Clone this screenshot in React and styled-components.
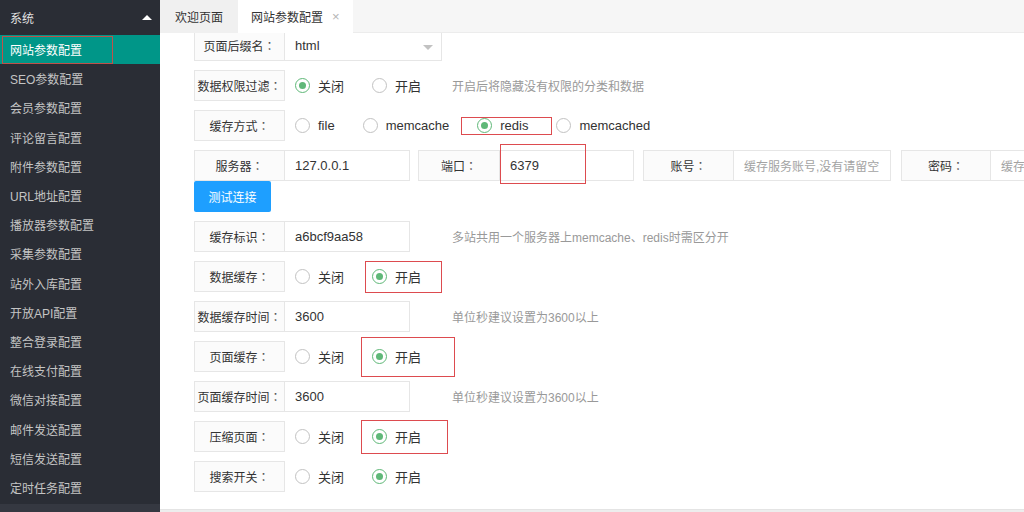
import React from "react"
import styled, { createGlobalStyle, css } from "styled-components"

const GlobalStyle = createGlobalStyle`
    html, body {
        margin: 0;
        padding: 0;
        background: #fff;
    }
    body {
        font-family: "Liberation Sans", "Noto Sans CJK SC", sans-serif;
        color: #333;
    }
    * {
        box-sizing: border-box;
    }
`

const Page = styled.div`
    display: flex;
    width: 1024px;
    height: 512px;
    overflow: hidden;
`

const Sidebar = styled.nav`
    width: 160px;
    flex-shrink: 0;
    background: #2a2d35;
    overflow: hidden;
`

const SideHeader = styled.div`
    height: 35px;
    padding: 0 8px 0 10px;
    display: flex;
    align-items: center;
    justify-content: space-between;
    font-size: 12px;
    color: #e2e2e2;
`

const Caret = styled.span`
    width: 0;
    height: 0;
    border-left: 5px solid transparent;
    border-right: 5px solid transparent;
    border-bottom: 5px solid #fff;
`

const SideItem = styled.div`
    position: relative;
    height: 29.2px;
    padding-left: 10px;
    display: flex;
    align-items: center;
    font-size: 12px;
    color: #c4c4c4;
    ${p => p.$active && css`
        background: #009688;
        color: #fff;
    `}
`

const SideMark = styled.span`
    position: absolute;
    left: 2px;
    top: 1px;
    bottom: 0;
    width: 111px;
    border: 1.5px solid #c0514a;
`

const SideGroup = styled.div`
    height: 35px;
    margin-top: 2px;
    background: #353841;
`

const Main = styled.main`
    flex: 1;
    display: flex;
    flex-direction: column;
    min-width: 0;
`

const TabBar = styled.div`
    height: 33px;
    flex-shrink: 0;
    display: flex;
    background: #f6f6f6;
    border-bottom: 1px solid #ececec;
    position: relative;
    z-index: 2;
`

const Tab = styled.div`
    height: 33px;
    padding: 0 ${p => (p.$active ? "13px" : "15px")};
    display: flex;
    align-items: center;
    font-size: 12px;
    color: #333;
    background: ${p => (p.$active ? "#fff" : "#f0f0f0")};
`

const Close = styled.span`
    margin-left: 9px;
    font-size: 13px;
    color: #b5b5b5;
`

const Body = styled.section`
    flex: 1;
    overflow: hidden;
    padding-left: 34px;
`

const Footer = styled.footer`
    height: 3px;
    flex-shrink: 0;
    background: #ededed;
    border-top: 1px solid #e4e4e4;
`

const Form = styled.div`
    margin-top: -3px;
    display: flex;
    flex-direction: column;
`

const Row = styled.div`
    display: flex;
    align-items: center;
    height: 31px;
    margin-bottom: ${p => (p.$tight ? "0" : "9px")};
`

const Group = styled.div`
    display: flex;
    height: 31px;
    margin-right: ${p => p.$gap || 0}px;
`

const Label = styled.div`
    width: ${p => p.$w || 91}px;
    height: 31px;
    flex-shrink: 0;
    display: flex;
    align-items: center;
    justify-content: center;
    padding: 0 2px;
    border: 1px solid #e6e6e6;
    background: #fbfbfb;
    font-size: 12px;
    color: #333;
    white-space: nowrap;
`

const Colon = styled.span`
    font-family: "Noto Sans CJK TC", sans-serif;
    color: #555;
`

const Field = styled.div`
    min-width: 167px;
    height: 31px;
    display: flex;
    align-items: center;
`

const Input = styled.div`
    position: relative;
    width: ${p => p.$w || 125}px;
    height: 31px;
    padding: 0 10px;
    display: flex;
    align-items: center;
    border: 1px solid #e6e6e6;
    border-left: 0;
    background: #fff;
    font-size: ${p => (p.$placeholder ? "12px" : "13px")};
    color: ${p => (p.$placeholder ? "#a3a3a3" : "#333")};
    white-space: nowrap;
    overflow: hidden;
`

const Select = styled(Input)`
    &::after {
        content: "";
        position: absolute;
        right: 8px;
        top: 14px;
        border-left: 5px solid transparent;
        border-right: 5px solid transparent;
        border-top: 5px solid #c2c2c2;
    }
`

const Radios = styled.div`
    display: flex;
    align-items: center;
    height: 31px;
    padding-left: 10px;
`

const RadioItem = styled.div`
    position: relative;
    height: 31px;
    display: flex;
    align-items: center;
    margin-right: 28px;
    font-size: 13px;
    color: #333;
`

const Circle = styled.span`
    width: 15px;
    height: 15px;
    margin-right: 8px;
    border-radius: 50%;
    border: 1px solid ${p => (p.$on ? "#5fb878" : "#c2c2c2")};
    display: flex;
    align-items: center;
    justify-content: center;
    &::after {
        content: "";
        display: ${p => (p.$on ? "block" : "none")};
        width: 7px;
        height: 7px;
        border-radius: 50%;
        background: #5fb878;
    }
`

const Hint = styled.div`
    font-size: 12px;
    color: #999;
    white-space: nowrap;
`

const Button = styled.div`
    width: 77px;
    height: 31px;
    display: flex;
    align-items: center;
    justify-content: center;
    background: #1e9fff;
    color: #fff;
    font-size: 12px;
    border-radius: 2px;
    margin-bottom: 9px;
`

const Marked = styled.div`
    position: relative;
    display: flex;
`

const Mark = styled.span`
    position: absolute;
    top: ${p => p.$t}px;
    right: ${p => p.$r}px;
    bottom: ${p => p.$b}px;
    left: ${p => p.$l}px;
    border: 1.5px solid #dd4b4f;
    pointer-events: none;
`

const menu = [
    "网站参数配置", "SEO参数配置", "会员参数配置", "评论留言配置", "附件参数配置",
    "URL地址配置", "播放器参数配置", "采集参数配置", "站外入库配置", "开放API配置",
    "整合登录配置", "在线支付配置", "微信对接配置", "邮件发送配置", "短信发送配置",
    "定时任务配置",
]

function FormLabel({ w, children }) {
    return (
        <Label $w={w}>
            {children}
            <Colon>：</Colon>
        </Label>
    )
}

function Radio({ label, on, mark }) {
    return (
        <RadioItem>
            <Circle $on={on} />
            {label}
            {mark && <Mark $t={mark[0]} $r={mark[1]} $b={mark[2]} $l={mark[3]} />}
        </RadioItem>
    )
}

function SwitchRow({ label, on, mark }) {
    return (
        <Row>
            <FormLabel>{label}</FormLabel>
            <Field>
                <Radios>
                    <Radio label="关闭" on={!on} />
                    <Radio label="开启" on={on} mark={mark} />
                </Radios>
            </Field>
        </Row>
    )
}

function TextRow({ label, value, hint }) {
    return (
        <Row>
            <FormLabel>{label}</FormLabel>
            <Field>
                <Input>{value}</Input>
            </Field>
            {hint && <Hint>{hint}</Hint>}
        </Row>
    )
}

export default function App() {
    return (
        <Page>
            <GlobalStyle />
            <Sidebar>
                <SideHeader>
                    系统
                    <Caret />
                </SideHeader>
                {menu.map((m, i) => (
                    <SideItem key={m} $active={i === 0}>
                        {m}
                        {i === 0 && <SideMark />}
                    </SideItem>
                ))}
                <SideGroup />
            </Sidebar>
            <Main>
                <TabBar>
                    <Tab>欢迎页面</Tab>
                    <Tab $active>
                        网站参数配置
                        <Close>×</Close>
                    </Tab>
                </TabBar>
                <Body>
                    <Form>
                        <Row>
                            <FormLabel>页面后缀名</FormLabel>
                            <Field>
                                <Select $w={157}>html</Select>
                            </Field>
                        </Row>
                        <Row>
                            <FormLabel>数据权限过滤</FormLabel>
                            <Field>
                                <Radios>
                                    <Radio label="关闭" on />
                                    <Radio label="开启" />
                                </Radios>
                            </Field>
                            <Hint>开启后将隐藏没有权限的分类和数据</Hint>
                        </Row>
                        <Row>
                            <FormLabel>缓存方式</FormLabel>
                            <Field>
                                <Radios>
                                    <Radio label="file" />
                                    <Radio label="memcache" />
                                    <Radio label="redis" on mark={[7, -24, 6, -16]} />
                                    <Radio label="memcached" />
                                </Radios>
                            </Field>
                        </Row>
                        <Row $tight>
                            <Group $gap={8}>
                                <FormLabel>服务器</FormLabel>
                                <Input>127.0.0.1</Input>
                            </Group>
                            <Group $gap={9}>
                                <FormLabel w={82}>端口</FormLabel>
                                <Marked>
                                    <Input $w={134}>6379</Input>
                                    <Mark $t={-6} $r={48} $b={-3} $l={0} />
                                </Marked>
                            </Group>
                            <Group $gap={10}>
                                <FormLabel w={91}>账号</FormLabel>
                                <Input $w={157} $placeholder>缓存服务账号,没有请留空</Input>
                            </Group>
                            <Group>
                                <FormLabel w={90}>密码</FormLabel>
                                <Input $w={157} $placeholder>缓存服务密码,没有请留空</Input>
                            </Group>
                        </Row>
                        <Button>测试连接</Button>
                        <TextRow
                            label="缓存标识"
                            value="a6bcf9aa58"
                            hint="多站共用一个服务器上memcache、redis时需区分开"
                        />
                        <SwitchRow label="数据缓存" on mark={[0, -21, -1, -7]} />
                        <TextRow label="数据缓存时间" value="3600" hint="单位秒建议设置为3600以上" />
                        <SwitchRow label="页面缓存" on mark={[-4, -34, -5, -11]} />
                        <TextRow label="页面缓存时间" value="3600" hint="单位秒建议设置为3600以上" />
                        <SwitchRow label="压缩页面" on mark={[-1, -27, -2, -11]} />
                        <SwitchRow label="搜索开关" on />
                    </Form>
                </Body>
                <Footer />
            </Main>
        </Page>
    )
}
